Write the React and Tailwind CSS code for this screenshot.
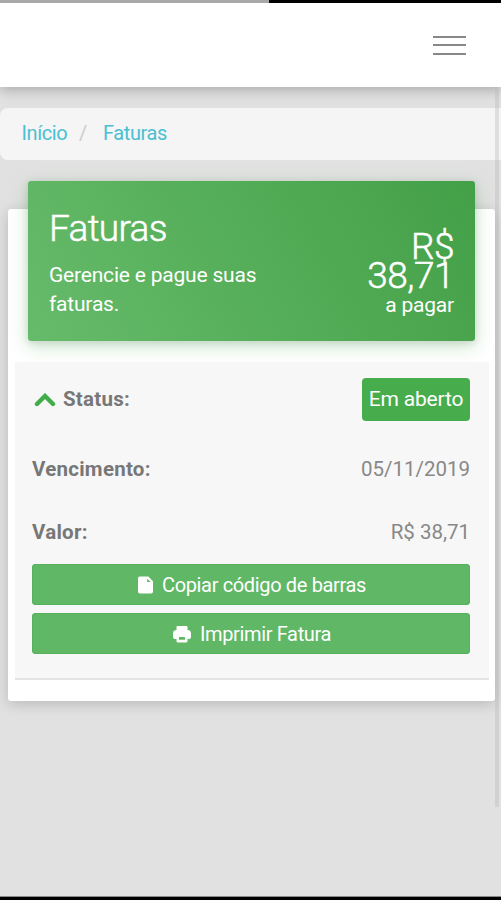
const details = [
  { label: "Vencimento:", value: "05/11/2019" },
  { label: "Valor:", value: "R$ 38,71" },
];

function FileIcon() {
  return (
    <svg viewBox="0 0 16 18" className="h-[18px] w-[15px]" fill="currentColor" aria-hidden="true">
      <path
        fillRule="evenodd"
        d="M2 0h9L16 5V16a2 2 0 0 1-2 2H2a2 2 0 0 1-2-2V2a2 2 0 0 1 2-2Zm7.8 2.2v3.6h3.8Z"
      />
    </svg>
  );
}

function PrintIcon() {
  return (
    <svg viewBox="0 0 18 17" className="h-[17px] w-[18px]" fill="currentColor" aria-hidden="true">
      <path
        fillRule="evenodd"
        d="M4.5 0h9a1 1 0 0 1 1 1v3A3.5 3.5 0 0 1 18 7.5V11a2 2 0 0 1-2 2h-1.5v2a1.5 1.5 0 0 1-1.5 1.5H5A1.5 1.5 0 0 1 3.5 15v-2H2a2 2 0 0 1-2-2V7.5A3.5 3.5 0 0 1 3.5 4V1a1 1 0 0 1 1-1ZM6 11v2.8h6V11Z"
      />
    </svg>
  );
}

function Header() {
  return (
    <header className="relative z-10 h-[87px] bg-white shadow-[0_3px_12px_rgba(0,0,0,0.25)]">
      <div className="flex h-[3px] bg-black">
        <div className="w-[269px] bg-[#a9a9a9]" />
      </div>
      <div className="flex h-[84px] items-center justify-end pr-[35px]">
        <button type="button" aria-label="Menu" className="flex w-[33px] flex-col gap-[6.5px]">
          <span className="h-[2px] bg-[#888]" />
          <span className="h-[2px] bg-[#888]" />
          <span className="h-[2px] bg-[#888]" />
        </button>
      </div>
    </header>
  );
}

function Breadcrumb() {
  return (
    <nav className="mt-[21px] flex h-[52px] items-center rounded-l-lg bg-[#f5f5f5] pb-[2px] pl-[21.5px] text-[20px] text-[#4bbfd1]">
      <a href="#inicio" className="w-[57.5px] tracking-[-0.4px]">Início</a>
      <span className="w-[24px] text-[#ccc]">/</span>
      <a href="#faturas" className="tracking-[-0.4px]">Faturas</a>
    </nav>
  );
}

function Banner() {
  return (
    <div className="mx-5 -mt-7 flex h-[160px] justify-between rounded-[3px] bg-linear-60 from-[#66bb6a] to-[#43a047] pr-[21px] pl-[21px] text-white shadow-[0_6px_20px_rgba(76,175,80,0.25),0_2px_8px_rgba(0,0,0,0.14)]">
      <div className="w-[240px] pt-[24px]">
        <h1 className="text-[37px] leading-[48px] font-light tracking-[-0.7px] [-webkit-text-stroke:0.5px_white]">Faturas</h1>
        <p className="mt-[8.5px] text-[21px] leading-[29px] tracking-[-0.2px]">Gerencie e pague suas faturas.</p>
      </div>
      <div className="w-[110px] pt-[51px] text-right">
        <p className="text-[37px] leading-[29px] font-light tracking-[-0.5px] [-webkit-text-stroke:0.5px_white]">R$ 38,71</p>
        <p className="mt-px text-[21px] leading-[29px] tracking-[-0.2px]">a pagar</p>
      </div>
    </div>
  );
}

function ActionButton({ icon: Icon, children }) {
  return (
    <button
      type="button"
      className="flex h-[41px] w-full items-center justify-center gap-[9px] rounded bg-[#60b765] pt-[2px] pl-[2px] text-[20px] tracking-[-0.35px] text-white shadow-[inset_0_0_0_1px_#55b25a]"
    >
      <Icon />
      {children}
    </button>
  );
}

function App() {
  return (
    <div className="flex h-[900px] w-[501px] flex-col overflow-hidden bg-[#e1e1e1] font-['Roboto',sans-serif]">
      <div className="relative flex-1">
        <Header />
        <Breadcrumb />
        <main className="mt-[48.5px] mr-[6px] ml-2 flow-root h-[492.5px] rounded-[3px] bg-white shadow-[0_3px_14px_rgba(0,0,0,0.18)]">
          <Banner />
          <section className="mt-[21.5px] ml-[7px] h-[318px] w-[474px] border-b-2 border-[#e4e4e4] bg-[#f7f7f7] pt-4 pr-[19px] pl-[17px] text-[20.5px] text-[#888]">
            <div className="flex h-[43px] items-center justify-between">
              <div className="flex items-center gap-[7px]">
                <svg viewBox="0 0 22 14" className="ml-[2px] h-[14px] w-[22px]" fill="none" aria-hidden="true">
                  <path d="m3 11 8-8 8 8" stroke="#43ac4a" strokeWidth="4.4" strokeLinecap="round" />
                </svg>
                <strong className="font-bold tracking-[0.25px] text-[#777]">Status:</strong>
              </div>
              <span className="flex h-[43px] w-[108px] items-center justify-center rounded bg-[#47ac4b] text-[21px] tracking-[-0.2px] whitespace-nowrap text-white">
                Em aberto
              </span>
            </div>
            {details.map(({ label, value }) => (
              <div key={label} className="mt-[33px] flex h-[30px] items-center justify-between">
                <strong className="font-bold tracking-[0.25px] text-[#777]">{label}</strong>
                <span>{value}</span>
              </div>
            ))}
            <div className="mt-[16.5px] flex flex-col gap-2">
              <ActionButton icon={FileIcon}>Copiar código de barras</ActionButton>
              <ActionButton icon={PrintIcon}>Imprimir Fatura</ActionButton>
            </div>
          </section>
        </main>
        {/* scrollbar thumb, drawn over the page edge */}
        <div className="absolute top-[87px] right-[2px] z-20 h-[720px] w-1 bg-[#b5b5b5]/35" />
      </div>
      <footer className="h-[4px] border-t border-[#888] bg-black" />
    </div>
  );
}

export default App;
